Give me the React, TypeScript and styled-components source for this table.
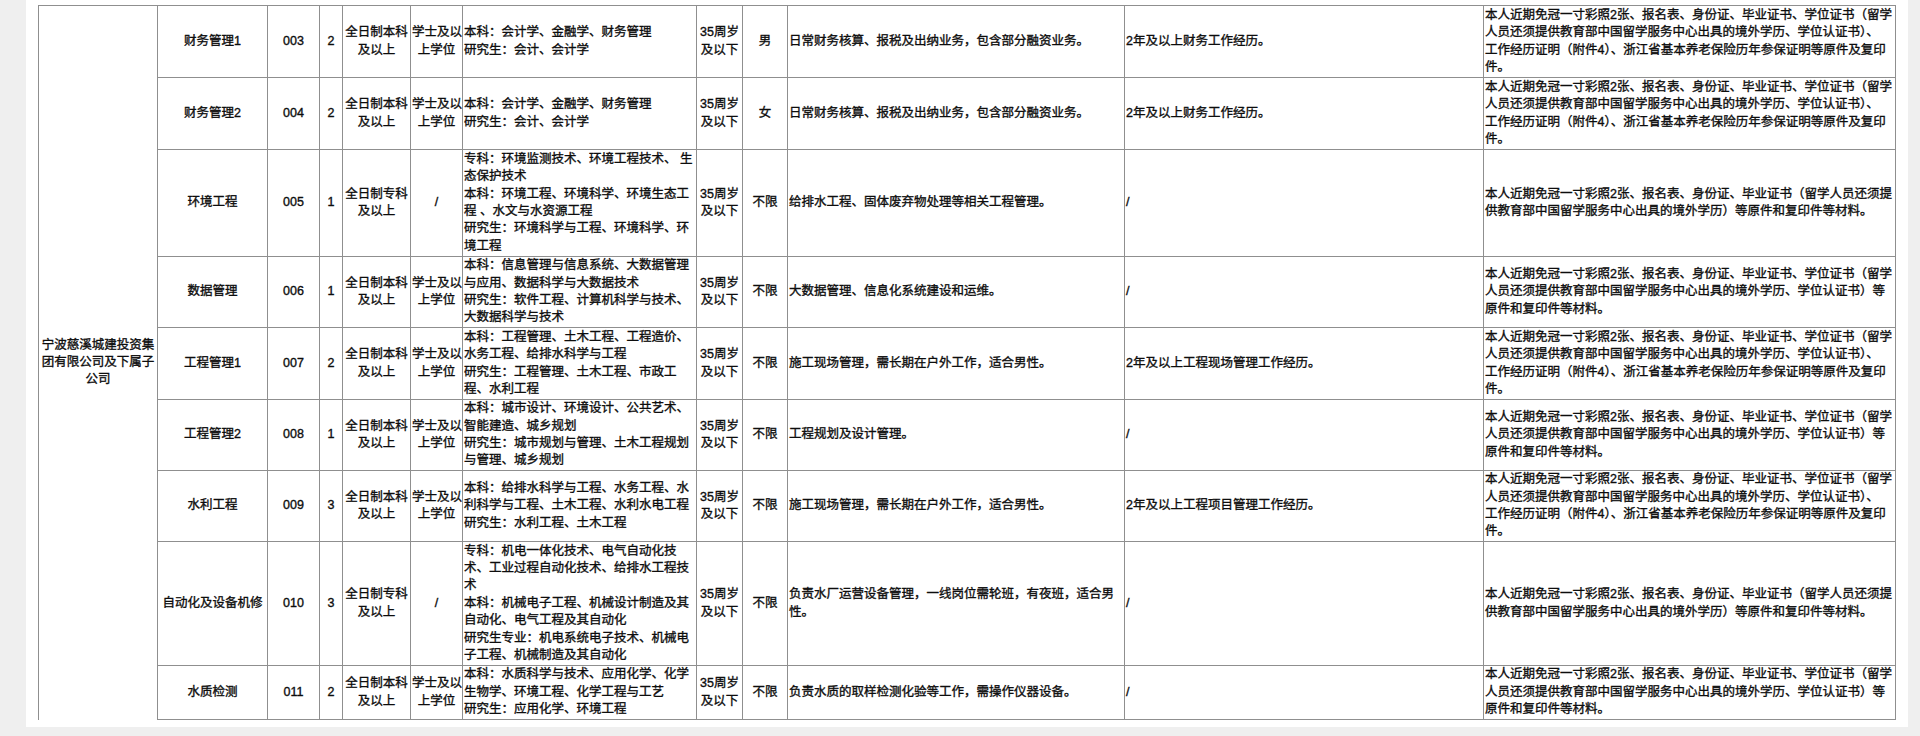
import styled, { createGlobalStyle } from 'styled-components';
import { Fragment } from 'react';

const GlobalStyle = createGlobalStyle`
  html, body {
    margin: 0;
    padding: 0;
    background: #efefef;
  }
`;

const REMARK_A = [
  '本人近期免冠一寸彩照2张、报名表、身份证、毕业证书、学位证书（留学',
  '人员还须提供教育部中国留学服务中心出具的境外学历、学位认证书）、',
  '工作经历证明（附件4）、浙江省基本养老保险历年参保证明等原件及复印',
  '件。',
];
const REMARK_B = [
  '本人近期免冠一寸彩照2张、报名表、身份证、毕业证书（留学人员还须提',
  '供教育部中国留学服务中心出具的境外学历）等原件和复印件等材料。',
];
const REMARK_C = [
  '本人近期免冠一寸彩照2张、报名表、身份证、毕业证书、学位证书（留学',
  '人员还须提供教育部中国留学服务中心出具的境外学历、学位认证书）等',
  '原件和复印件等材料。',
];

type Job = {
  name: string;
  code: string;
  count: string;
  edu: string[];
  degree: string[];
  major: string[];
  gender: string;
  duty: string[];
  exp: string;
  remark: string[];
  height: number;
};

const BK = ['全日制本科', '及以上'];
const ZK = ['全日制专科', '及以上'];
const XS = ['学士及以', '上学位'];

const jobs: Job[] = [
  {
    name: '财务管理1', code: '003', count: '2', edu: BK, degree: XS,
    major: ['本科：会计学、金融学、财务管理', '研究生：会计、会计学'],
    gender: '男', duty: ['日常财务核算、报税及出纳业务，包含部分融资业务。'],
    exp: '2年及以上财务工作经历。', remark: REMARK_A, height: 72,
  },
  {
    name: '财务管理2', code: '004', count: '2', edu: BK, degree: XS,
    major: ['本科：会计学、金融学、财务管理', '研究生：会计、会计学'],
    gender: '女', duty: ['日常财务核算、报税及出纳业务，包含部分融资业务。'],
    exp: '2年及以上财务工作经历。', remark: REMARK_A, height: 72,
  },
  {
    name: '环境工程', code: '005', count: '1', edu: ZK, degree: ['/'],
    major: [
      '专科：环境监测技术、环境工程技术、 生',
      '态保护技术',
      '本科：环境工程、环境科学、环境生态工',
      '程 、水文与水资源工程',
      '研究生：环境科学与工程、环境科学、环',
      '境工程',
    ],
    gender: '不限', duty: ['给排水工程、固体废弃物处理等相关工程管理。'],
    exp: '/', remark: REMARK_B, height: 107,
  },
  {
    name: '数据管理', code: '006', count: '1', edu: BK, degree: XS,
    major: [
      '本科：信息管理与信息系统、大数据管理',
      '与应用、数据科学与大数据技术',
      '研究生：软件工程、计算机科学与技术、',
      '大数据科学与技术',
    ],
    gender: '不限', duty: ['大数据管理、信息化系统建设和运维。'],
    exp: '/', remark: REMARK_C, height: 71,
  },
  {
    name: '工程管理1', code: '007', count: '2', edu: BK, degree: XS,
    major: [
      '本科：工程管理、土木工程、工程造价、',
      '水务工程、给排水科学与工程',
      '研究生：工程管理、土木工程、市政工',
      '程、水利工程',
    ],
    gender: '不限', duty: ['施工现场管理，需长期在户外工作，适合男性。'],
    exp: '2年及以上工程现场管理工作经历。', remark: REMARK_A, height: 72,
  },
  {
    name: '工程管理2', code: '008', count: '1', edu: BK, degree: XS,
    major: [
      '本科：城市设计、环境设计、公共艺术、',
      '智能建造、城乡规划',
      '研究生：城市规划与管理、土木工程规划',
      '与管理、城乡规划',
    ],
    gender: '不限', duty: ['工程规划及设计管理。'],
    exp: '/', remark: REMARK_C, height: 71,
  },
  {
    name: '水利工程', code: '009', count: '3', edu: BK, degree: XS,
    major: [
      '本科：给排水科学与工程、水务工程、水',
      '利科学与工程、土木工程、水利水电工程',
      '研究生：水利工程、土木工程',
    ],
    gender: '不限', duty: ['施工现场管理，需长期在户外工作，适合男性。'],
    exp: '2年及以上工程项目管理工作经历。', remark: REMARK_A, height: 71,
  },
  {
    name: '自动化及设备机修', code: '010', count: '3', edu: ZK, degree: ['/'],
    major: [
      '专科：机电一体化技术、电气自动化技',
      '术、工业过程自动化技术、给排水工程技',
      '术',
      '本科：机械电子工程、机械设计制造及其',
      '自动化、电气工程及其自动化',
      '研究生专业：机电系统电子技术、机械电',
      '子工程、机械制造及其自动化',
    ],
    gender: '不限', duty: ['负责水厂运营设备管理，一线岗位需轮班，有夜班，适合男', '性。'],
    exp: '/', remark: REMARK_B, height: 124,
  },
  {
    name: '水质检测', code: '011', count: '2', edu: BK, degree: XS,
    major: [
      '本科：水质科学与技术、应用化学、化学',
      '生物学、环境工程、化学工程与工艺',
      '研究生：应用化学、环境工程',
    ],
    gender: '不限', duty: ['负责水质的取样检测化验等工作，需操作仪器设备。'],
    exp: '/', remark: REMARK_C, height: 54,
  },
];

const columns = [119, 110, 52, 23, 68, 52, 234, 46, 45, 337, 359, 412];

const Lines = ({ lines }: { lines: string[] }) => (
  <>
    {lines.map((l, i) => (
      <Fragment key={i}>
        {i > 0 && <br />}
        {l}
      </Fragment>
    ))}
  </>
);

export default function App() {
  return (
    <>
      <GlobalStyle />
      <Sheet>
        <Table>
          <colgroup>
            {columns.map((w, i) => (
              <col key={i} style={{ width: w }} />
            ))}
          </colgroup>
          <tbody>
            {jobs.map((job, i) => (
              <Row key={job.code} $h={job.height}>
                {i === 0 && (
                  <Company rowSpan={jobs.length}>
                    宁波慈溪城建投资集<br />团有限公司及下属子<br />公司
                  </Company>
                )}
                <Cell>{job.name}</Cell>
                <Cell>{job.code}</Cell>
                <Cell>{job.count}</Cell>
                <Cell><Lines lines={job.edu} /></Cell>
                <Cell><Lines lines={job.degree} /></Cell>
                <Cell $left><Lines lines={job.major} /></Cell>
                <Cell>35周岁<br />及以下</Cell>
                <Cell>{job.gender}</Cell>
                <Cell $left><Lines lines={job.duty} /></Cell>
                <Cell $left>{job.exp}</Cell>
                <Cell $left><Lines lines={job.remark} /></Cell>
              </Row>
            ))}
          </tbody>
        </Table>
      </Sheet>
    </>
  );
}

const Sheet = styled.div`
  box-sizing: border-box;
  margin-left: 26px;
  width: 1882px;
  height: 727px;
  padding: 5px 0 0 12px;
  background: #ffffff;
  overflow: hidden;
`;

const Table = styled.table`
  border-collapse: collapse;
  table-layout: fixed;
  width: 1857px;
  font-family: "Liberation Sans", "Noto Sans CJK SC", sans-serif;
  font-size: 12.5px;
  font-weight: 400;
  line-height: 17.4px;
  color: #0d0d0d;
  -webkit-text-stroke: 0.35px #0d0d0d;
`;

const Row = styled.tr<{ $h: number }>`
  height: ${(p) => p.$h}px;
`;

const Cell = styled.td<{ $left?: boolean }>`
  border: 1px solid #8f8f8f;
  padding: 0 1px;
  vertical-align: middle;
  text-align: ${(p) => (p.$left ? 'left' : 'center')};
  white-space: nowrap;
  overflow: visible;
`;

const Company = styled(Cell)`
  border-bottom: none;
  white-space: normal;
`;
